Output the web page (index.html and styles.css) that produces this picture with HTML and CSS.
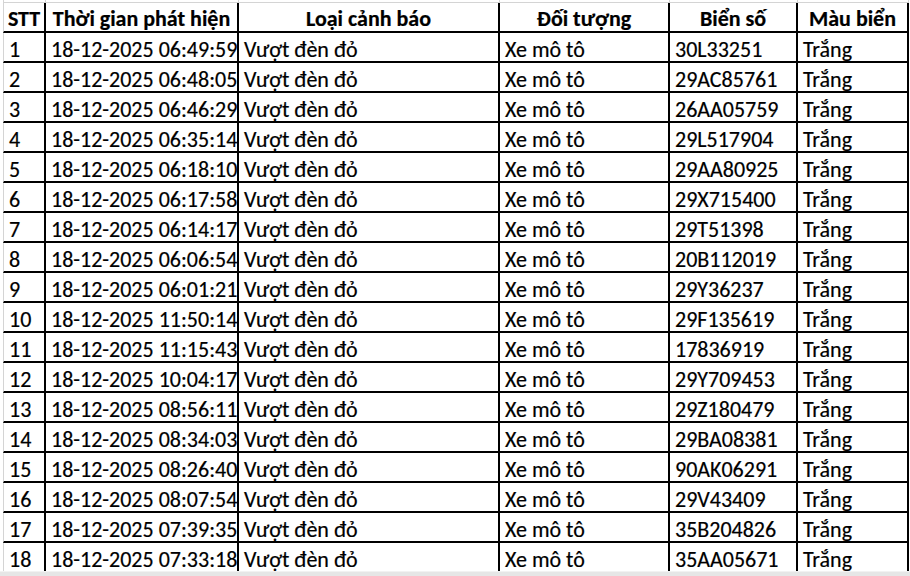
FILE: index.html
```html
<!DOCTYPE html>
<html lang="vi">
<head>
<meta charset="utf-8">
<title>Danh sách vi phạm</title>
<link rel="stylesheet" href="styles.css">
</head>
<body>
<div class="sheet">
  <div class="grid-area">
    <table class="tbl">
      <colgroup>
        <col class="c1"><col class="c2"><col class="c3"><col class="c4"><col class="c5"><col class="c6">
      </colgroup>
      <tr class="stub"><td></td><td></td><td></td><td></td><td></td><td></td></tr>
      <tr class="head">
        <th>STT</th><th>Thời gian phát hiện</th><th>Loại cảnh báo</th><th>Đối tượng</th><th>Biển số</th><th>Màu biển</th>
      </tr>
      <tr><td>1</td><td>18-12-2025 06:49:59</td><td>Vượt đèn đỏ</td><td>Xe mô tô</td><td>30L33251</td><td>Trắng</td></tr>
      <tr><td>2</td><td>18-12-2025 06:48:05</td><td>Vượt đèn đỏ</td><td>Xe mô tô</td><td>29AC85761</td><td>Trắng</td></tr>
      <tr><td>3</td><td>18-12-2025 06:46:29</td><td>Vượt đèn đỏ</td><td>Xe mô tô</td><td>26AA05759</td><td>Trắng</td></tr>
      <tr><td>4</td><td>18-12-2025 06:35:14</td><td>Vượt đèn đỏ</td><td>Xe mô tô</td><td>29L517904</td><td>Trắng</td></tr>
      <tr><td>5</td><td>18-12-2025 06:18:10</td><td>Vượt đèn đỏ</td><td>Xe mô tô</td><td>29AA80925</td><td>Trắng</td></tr>
      <tr><td>6</td><td>18-12-2025 06:17:58</td><td>Vượt đèn đỏ</td><td>Xe mô tô</td><td>29X715400</td><td>Trắng</td></tr>
      <tr><td>7</td><td>18-12-2025 06:14:17</td><td>Vượt đèn đỏ</td><td>Xe mô tô</td><td>29T51398</td><td>Trắng</td></tr>
      <tr><td>8</td><td>18-12-2025 06:06:54</td><td>Vượt đèn đỏ</td><td>Xe mô tô</td><td>20B112019</td><td>Trắng</td></tr>
      <tr><td>9</td><td>18-12-2025 06:01:21</td><td>Vượt đèn đỏ</td><td>Xe mô tô</td><td>29Y36237</td><td>Trắng</td></tr>
      <tr><td>10</td><td>18-12-2025 11:50:14</td><td>Vượt đèn đỏ</td><td>Xe mô tô</td><td>29F135619</td><td>Trắng</td></tr>
      <tr><td>11</td><td>18-12-2025 11:15:43</td><td>Vượt đèn đỏ</td><td>Xe mô tô</td><td>17836919</td><td>Trắng</td></tr>
      <tr><td>12</td><td>18-12-2025 10:04:17</td><td>Vượt đèn đỏ</td><td>Xe mô tô</td><td>29Y709453</td><td>Trắng</td></tr>
      <tr><td>13</td><td>18-12-2025 08:56:11</td><td>Vượt đèn đỏ</td><td>Xe mô tô</td><td>29Z180479</td><td>Trắng</td></tr>
      <tr><td>14</td><td>18-12-2025 08:34:03</td><td>Vượt đèn đỏ</td><td>Xe mô tô</td><td>29BA08381</td><td>Trắng</td></tr>
      <tr><td>15</td><td>18-12-2025 08:26:40</td><td>Vượt đèn đỏ</td><td>Xe mô tô</td><td>90AK06291</td><td>Trắng</td></tr>
      <tr><td>16</td><td>18-12-2025 08:07:54</td><td>Vượt đèn đỏ</td><td>Xe mô tô</td><td>29V43409</td><td>Trắng</td></tr>
      <tr><td>17</td><td>18-12-2025 07:39:35</td><td>Vượt đèn đỏ</td><td>Xe mô tô</td><td>35B204826</td><td>Trắng</td></tr>
      <tr><td>18</td><td>18-12-2025 07:33:18</td><td>Vượt đèn đỏ</td><td>Xe mô tô</td><td>35AA05671</td><td>Trắng</td></tr>
    </table>
  </div>
  <div class="hbar"></div>
</div>
</body>
</html>
```
FILE: styles.css
```css
* { box-sizing: border-box; }
html, body { margin: 0; padding: 0; background: #fff; }
body {
  width: 910px;
  height: 576px;
  overflow: hidden;
  font-family: Carlito, Lato, "Liberation Sans", sans-serif;
  color: #000;
}
.sheet {
  display: flex;
  flex-direction: column;
  height: 576px;
}
.grid-area {
  height: 571px;
  overflow: hidden;
  padding-left: 3px;
}
.hbar {
  height: 5px;
  background: #e6e6e6;
  border-top: 1px solid #f2f2f2;
}
.tbl {
  border-collapse: separate;
  border-spacing: 0;
  table-layout: fixed;
  width: 906px;
  font-size: 22px;
  -webkit-text-stroke: 0.2px #000;
}
.c1 { width: 43px; }
.c2 { width: 193px; }
.c3 { width: 261px; }
.c4 { width: 170px; }
.c5 { width: 128px; }
.c6 { width: 111px; }

.tbl td, .tbl th {
  border-right: 2px solid #000;
  border-bottom: 2px solid #000;
  height: 30px;
  padding: 6px 0 0 5px;
  white-space: nowrap;
  overflow: hidden;
  line-height: 22px;
  vertical-align: middle;
  text-align: left;
}
.tbl td:first-child, .tbl th:first-child {
  border-left: 1px solid #d4d4d4;
}
.tbl .stub td {
  height: 3px;
  border-bottom: 1px solid #d4d4d4;
  border-right: 1px solid #d4d4d4;
  padding: 0;
  line-height: 0;
}
.tbl .stub td:first-child { border-left: 1px solid #d4d4d4; }
.tbl .head th {
  height: 30px;
  font-weight: 700;
  text-align: center;
  padding: 4px 1px 0;
  line-height: 24px;
}
```
